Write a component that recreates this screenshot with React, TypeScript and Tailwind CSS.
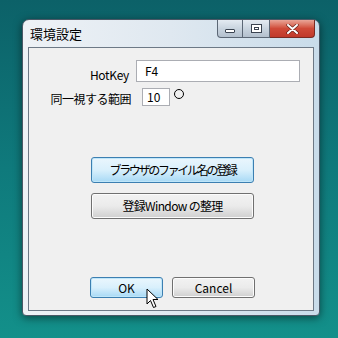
import React from 'react';

const jp = { fontFamily: '"Noto Sans CJK JP", "Noto Sans", sans-serif' };
const ui = { fontFamily: '"Noto Sans CJK JP", "Noto Sans", sans-serif' };

function CaptionButtons() {
  return (
    <div className="absolute top-0 right-[4px] flex h-[18px]">
      <div className="w-[26px] h-full rounded-bl-[4px] border border-t-0 border-[#5b6775] bg-gradient-to-b from-[#e4ebf2] via-[#c9d4df] to-[#b3c0cd] flex items-end justify-center pb-[4px]">
        <div className="w-[10px] h-[4px] border border-[#3a4350] bg-white rounded-[1px]" />
      </div>
      <div className="w-[27px] h-full border-b border-r border-[#5b6775] bg-gradient-to-b from-[#e4ebf2] via-[#c9d4df] to-[#b3c0cd] flex items-center justify-center">
        <div className="w-[11px] h-[9px] border border-[#3a4350] bg-white flex items-center justify-center">
          <div className="w-[5px] h-[3px] border border-[#3a4350]" />
        </div>
      </div>
      <div className="w-[45px] h-full rounded-br-[4px] border border-t-0 border-l-0 border-[#7a2a22] bg-gradient-to-b from-[#e8a598] via-[#cf4a38] to-[#c0392b] flex items-center justify-center">
        <svg width="13" height="10" viewBox="0 0 13 10">
          <path d="M2 1 L11 9 M11 1 L2 9" stroke="#5a1a12" strokeWidth="3.2" strokeLinecap="round" />
          <path d="M2 1 L11 9 M11 1 L2 9" stroke="#ffffff" strokeWidth="2" strokeLinecap="round" />
        </svg>
      </div>
    </div>
  );
}

function Button({ children, focused, className, style }: { children: React.ReactNode; focused?: boolean; className?: string; style?: React.CSSProperties }) {
  return (
    <div
      className={
        'flex items-center justify-center rounded-[3px] border text-black whitespace-nowrap ' +
        (focused
          ? 'border-[#3c7fb1] bg-gradient-to-b from-[#eaf6fd] via-[#d9f0fc] to-[#a7d9f5] shadow-[inset_0_0_0_1px_#bfe6f9] '
          : 'border-[#707070] bg-gradient-to-b from-[#f2f2f2] via-[#ebebeb] to-[#cfcfcf] shadow-[inset_0_0_0_1px_#fcfcfc] ') +
        (className ?? '')
      }
      style={style}
    >
      {children}
    </div>
  );
}

export default function App() {
  return (
    <div className="w-[338px] h-[338px] overflow-hidden bg-gradient-to-b from-[#0c6168] via-[#0f7a7c] to-[#13908a] pl-[22px] pt-[19px]">
      <div className="relative w-[298px] h-[297px] rounded-t-[7px] rounded-b-[4px] border border-[#4a5866] bg-gradient-to-r from-[#eef2f6] via-[#dfe8f0] to-[#c9dcea] shadow-[0_2px_8px_rgba(0,0,0,0.5)] flex flex-col">
        <div className="h-[27px] flex items-center pl-[7px] text-[13px] text-black" style={jp}>
          環境設定
        </div>
        <CaptionButtons />
        <div className="mx-[5px] mb-[4px] flex-1 border border-[#6d7986] bg-[#f0f0f0] relative">
          <div className="pt-[12px] flex flex-col gap-[6px]">
            <div className="flex items-end">
              <div className="w-[100px] text-right text-[12px] leading-[15px] tracking-[-0.3px] text-black" style={ui}>HotKey</div>
              <div className="ml-[7px] w-[164px] h-[22px] border border-[#abadb3] bg-white text-[12px] leading-[16px] pl-[8px] pt-[2px] text-black" style={ui}>
                F4
              </div>
            </div>
            <div className="flex items-end">
              <div className="w-[102px] text-right text-[12px] leading-[15px] tracking-[-0.5px] text-black" style={jp}>同一視する範囲</div>
              <div className="ml-[11px] w-[28px] h-[18px] border border-[#abadb3] bg-white text-[12px] leading-[16px] pl-[4px] text-black" style={ui}>
                10
              </div>
              <div className="ml-[4px] mb-[7px] w-[10px] h-[10px] rounded-full border border-black" />
            </div>
          </div>
          <div className="mt-[51px] ml-[62px] flex flex-col gap-[10px]" style={jp}>
            <Button focused className="w-[163px] h-[26px] text-[12px] tracking-[-2.3px]">ブラウザのファイル名の登録</Button>
            <Button className="w-[163px] h-[26px] text-[12px] tracking-[-0.8px]">
              登録<span className="tracking-[-0.6px]">Window</span>&nbsp;の整理
            </Button>
          </div>
          <div className="mt-[58px] ml-[61px] flex gap-[9px] text-[12px]" style={ui}>
            <Button focused className="w-[73px] h-[21px]">OK</Button>
            <Button className="w-[83px] h-[21px]">Cancel</Button>
          </div>
          <svg className="absolute left-[117px] top-[240px]" width="14" height="22" viewBox="0 0 14 22">
            <path d="M1 1 L1 16 L4.5 12.5 L7.5 19.5 L10 18.5 L7 11.5 L12 11.5 Z" fill="white" stroke="black" strokeWidth="1" strokeLinejoin="round" />
          </svg>
        </div>
      </div>
    </div>
  );
}
